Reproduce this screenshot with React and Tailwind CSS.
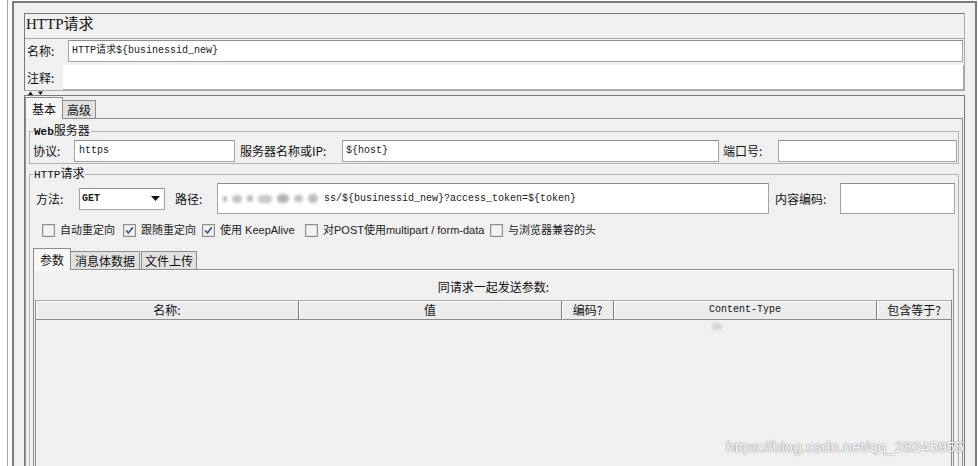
import React from 'react';

const cjk = "font-['Noto_Sans_CJK_SC',sans-serif]";
const mono = "font-['Liberation_Mono','Noto_Sans_CJK_SC',monospace]";
const serif = "font-['Liberation_Serif','Noto_Sans_CJK_SC',serif]";
const ui = "font-['Liberation_Sans','Noto_Sans_CJK_SC',sans-serif]";

function Lbl({ className, children }) {
    return (
        <div className={`shrink-0 whitespace-nowrap text-[12px] leading-[16px] text-[#111] ${cjk} ${className}`}>
            {children}
        </div>
    );
}

function TextBox({ className, children }) {
    return (
        <div className={`flex shrink-0 items-center overflow-hidden whitespace-nowrap border border-[#a3a3a3] border-t-[#8e8e8e] bg-white text-[10px] leading-[14px] text-[#1a1a1a] ${mono} ${className}`}>
            {children}
        </div>
    );
}

function Tab({ selected, className, children }) {
    return (
        <div
            className={`flex shrink-0 items-center justify-center border border-b-0 border-[#8c8c8c] text-[12px] leading-[16px] text-[#111] ${cjk} ${
                selected ? 'relative z-10 -mb-px h-[22px] bg-[#f7f7f7]' : 'h-[18px] bg-[#e1e1e1]'
            } ${className}`}
        >
            {children}
        </div>
    );
}

function Check({ checked }) {
    return (
        <svg width="13" height="13" viewBox="0 0 13 13" className="shrink-0">
            <rect x="0.5" y="0.5" width="12" height="12" fill="#f3f3f3" stroke="#8e8f8f" />
            <rect x="1.5" y="1.5" width="10" height="10" fill="none" stroke="#dedede" />
            {checked && (
                <path d="M3.2 6.4 L5.4 9 L9.8 3.4" fill="none" stroke="#4b5a7e" strokeWidth="1.7" />
            )}
        </svg>
    );
}

function CheckItem({ checked, className, children }) {
    return (
        <div className={`flex shrink-0 items-center gap-[5px] ${className}`}>
            <Check checked={checked} />
            <span className={`whitespace-nowrap text-[11px] leading-[13px] text-[#222] ${ui}`}>{children}</span>
        </div>
    );
}

// redacted part of the path: blurred smudges
function Smudge() {
    return (
        <div className="flex h-[12px] w-[101px] shrink-0 items-center gap-[5px] blur-[1.5px]">
            <div className="h-[6px] w-[4px] rounded-full bg-[#b0b0b0]" />
            <div className="h-[8px] w-[10px] rounded-full bg-[#c4c4c4]" />
            <div className="h-[7px] w-[6px] rounded-full bg-[#b8b8b8]" />
            <div className="h-[8px] w-[14px] rounded-full bg-[#c8c8c8]" />
            <div className="h-[9px] w-[12px] rounded-full bg-[#b4b4b4]" />
            <div className="h-[7px] w-[9px] rounded-full bg-[#c0c0c0]" />
            <div className="h-[9px] w-[10px] rounded-full bg-[#bdbdbd]" />
        </div>
    );
}

export default function App() {
    return (
        <div className="relative flex h-[466px] w-[978px] overflow-hidden bg-white text-black">
            <div className="w-[7px] shrink-0" />
            <div className="w-px shrink-0 bg-[#a6a6a6]" />
            <div className="w-[4px] shrink-0" />

            <div className="mt-px flex w-[965px] shrink-0 flex-col border-x-2 border-t-2 border-[#7c7c7c] bg-[#f0f0f0] px-[10px] pt-[10px]">
                {/* title, name and comment */}
                <div className="flex h-[78px] shrink-0 flex-col border border-[#7a7a7a] border-r-[#a9a9a9] border-b-[#a9a9a9]">
                    <div className={`h-[24px] pl-px text-[15px] leading-[20px] text-[#111] ${serif}`}>HTTP请求</div>
                    <div className="flex flex-1 flex-col border-t border-[#a9a9a9]">
                        <div className="flex h-[24px] items-center">
                            <Lbl className="w-[43px] pl-[2px]">名称:</Lbl>
                            <TextBox className="mr-px h-[22px] flex-1 pl-[3px]">{'HTTP请求${businessid_new}'}</TextBox>
                        </div>
                        <div className="flex flex-1 pt-[2px]">
                            <Lbl className="flex w-[38px] items-center pl-[2px]">注释:</Lbl>
                            <div className="flex-1 border-r border-b border-[#a9a9a9] bg-white" />
                        </div>
                    </div>
                </div>

                {/* split divider */}
                <div className="flex h-[4px] shrink-0 items-end pl-[4px]">
                    <svg width="18" height="4" viewBox="0 0 18 4">
                        <path d="M0 4 L2.5 0.5 L5 4 Z" fill="#111" />
                        <path d="M10 0.5 L15 0.5 L12.5 4 Z" fill="#111" />
                    </svg>
                </div>

                {/* lower panel */}
                <div className="flex min-h-0 flex-1 flex-col border-x border-t border-[#7a7a7a] pr-px">
                    <div className="flex h-[22px] shrink-0 items-end">
                        <Tab selected className="w-[38px]">基本</Tab>
                        <Tab className="w-[33px] border-l-0">高级</Tab>
                    </div>

                    <div className="flex min-h-0 flex-1 flex-col border-x border-t border-[#8d8d8d] px-[3px] pt-[4px]">
                        {/* Web server */}
                        <fieldset className="shrink-0 border border-[#b2b2b2] pb-px">
                            <legend className={`ml-[3px] px-px text-[12px] leading-[14px] text-[#111] ${cjk}`}>
                                <span className={`text-[11px] font-bold ${mono}`}>Web</span>服务器
                            </legend>
                            <div className="mt-[1px] flex h-[22px] items-center">
                                <Lbl className="w-[44px] pl-[3px]">协议:</Lbl>
                                <TextBox className="h-[22px] w-[161px] pl-[4px]">https</TextBox>
                                <Lbl className="w-[107px] pl-[5px]">服务器名称或IP:</Lbl>
                                <TextBox className="h-[22px] w-[377px] pl-[3px]">{'${host}'}</TextBox>
                                <Lbl className="w-[59px] pl-[4px]">端口号:</Lbl>
                                <TextBox className="h-[22px] w-[179px]" />
                            </div>
                        </fieldset>

                        {/* HTTP request */}
                        <fieldset className="mt-[2px] shrink-0 border border-[#b2b2b2]">
                            <legend className={`ml-[3px] px-px text-[12px] leading-[14px] text-[#111] ${cjk}`}>
                                <span className={`text-[11px] ${mono}`}>HTTP</span>请求
                            </legend>
                            <div className="mt-[1px] flex h-[31px] items-center">
                                <Lbl className="w-[49px] pl-[6px]">方法:</Lbl>
                                <TextBox className="h-[22px] w-[86px] pl-[2px] pr-[4px]">
                                    <span className="font-bold">GET</span>
                                    <svg width="9" height="5" viewBox="0 0 9 5" className="ml-auto">
                                        <path d="M0 0 L9 0 L4.5 5 Z" fill="#111" />
                                    </svg>
                                </TextBox>
                                <Lbl className="w-[52px] pl-[10px]">路径:</Lbl>
                                <TextBox className="h-[31px] w-[552px] pl-[5px]">
                                    <Smudge />
                                    <span className="shrink-0">{'ss/${businessid_new}?access_token=${token}'}</span>
                                </TextBox>
                                <Lbl className="w-[71px] pl-[6px]">内容编码:</Lbl>
                                <TextBox className="h-[31px] w-[115px]" />
                            </div>

                            <div className="mt-[10px] flex h-[13px] items-center pl-[12px]">
                                <CheckItem className="w-[81px]">自动重定向</CheckItem>
                                <CheckItem checked className="w-[79px]">跟随重定向</CheckItem>
                                <CheckItem checked className="w-[103px]">使用 KeepAlive</CheckItem>
                                <CheckItem className="w-[185px]">对POST使用multipart / form-data</CheckItem>
                                <CheckItem>与浏览器兼容的头</CheckItem>
                            </div>

                            <div className="ml-[3px] mt-[11px] flex h-[21px] items-end">
                                <Tab selected className="w-[38px]">参数</Tab>
                                <Tab className="w-[69px] border-l-0">消息体数据</Tab>
                                <Tab className="ml-px w-[56px]">文件上传</Tab>
                            </div>

                            <div className="ml-[3px] mr-[4px] flex h-[200px] flex-col border-x border-t border-[#8d8d8d] px-px">
                                <div className="h-px bg-white" />
                                <div className={`flex h-[29px] items-center justify-center pt-[3px] text-[12px] leading-[16px] text-[#111] ${cjk}`}>
                                    同请求一起发送参数:
                                </div>
                                <div className="flex flex-1 flex-col border-x border-[#8a8a8a]">
                                    <div className={`flex h-[20px] shrink-0 border-t border-b border-[#8a8a8a] border-t-[#a8a8a8] bg-[#ececec] text-[12px] leading-[16px] text-[#111] ${cjk}`}>
                                        <div className="flex w-[263px] items-center justify-center border-r border-[#7f7f7f] shadow-[inset_1px_1px_0_#fff]">名称:</div>
                                        <div className="flex w-[263px] items-center justify-center border-r border-[#7f7f7f] shadow-[inset_1px_1px_0_#fff]">值</div>
                                        <div className="flex w-[52px] items-center justify-center border-r border-[#7f7f7f] shadow-[inset_1px_1px_0_#fff]">编码?</div>
                                        <div className={`flex w-[263px] items-center justify-center border-r border-[#7f7f7f] text-[10px] shadow-[inset_1px_1px_0_#fff] ${mono}`}>Content-Type</div>
                                        <div className="flex flex-1 items-center justify-center shadow-[inset_1px_1px_0_#fff]">包含等于?</div>
                                    </div>
                                    <div className="flex-1 bg-[#f0f0f0]" />
                                </div>
                            </div>
                        </fieldset>
                    </div>
                </div>
            </div>

            <div className="absolute left-[712px] top-[323px] h-[7px] w-[10px] rounded-full bg-[#d6d6d6] blur-[1px]" />
            <div className={`absolute left-[726px] top-[437px] whitespace-nowrap text-[15.5px] leading-[20px] text-white [text-shadow:0_0_1px_rgba(0,0,0,0.55),0_0_2px_rgba(0,0,0,0.25)] ${ui}`}>
                https://blog.csdn.net/qq_28245955
            </div>
        </div>
    );
}
